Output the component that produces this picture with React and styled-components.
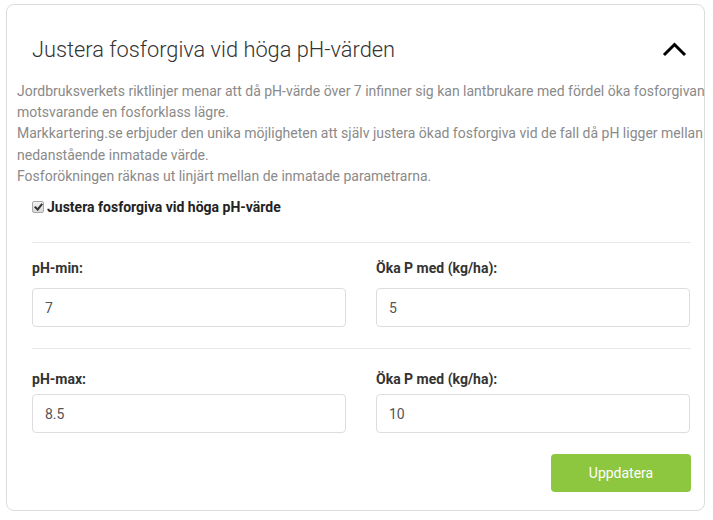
import React, {useState} from 'react';
import styled, {createGlobalStyle} from 'styled-components';

const Global = createGlobalStyle`
    html, body {
        margin: 0;
        padding: 0;
        background: #ffffff;
        font-family: Roboto, "Liberation Sans", sans-serif;
    }
    body {
        padding: 4px 7px 0 6px;
    }
`;

const Card = styled.div`
    border: 1px solid #dcdcdc;
    border-radius: 8px;
    width: 699px;
    height: 507px;
    box-sizing: border-box;
    padding: 0 0 0 10px;
    overflow: visible;
`;

const Head = styled.div`
    display: flex;
    align-items: center;
    justify-content: space-between;
    padding: 26px 17px 0 15px;
    height: 36px;
`;

const Title = styled.h2`
    margin: 0;
    font-size: 21.8px;
    font-weight: 300;
    color: #333333;
`;

const Toggle = styled.button`
    border: 0;
    background: none;
    padding: 0;
    display: flex;
    cursor: pointer;
`;

const Intro = styled.div`
    margin-top: 14px;
    width: 700px;
    font-size: 14px;
    line-height: 21.2px;
    color: #8a8a8a;
`;

const CheckRow = styled.label`
    display: flex;
    align-items: center;
    gap: 3px;
    margin: 12px 0 0 15px;
    font-size: 14px;
    font-weight: 700;
    color: #222222;
`;

const Box = styled.input`
    appearance: none;
    width: 12px;
    height: 12px;
    margin: 0 0 1px 0;
    border: 1px solid #a9a9a9;
    border-radius: 2px;
    background: linear-gradient(#f2f2f2, #d8d8d8);
    position: relative;
    &:checked::after {
        content: '';
        position: absolute;
        left: 3px;
        top: 0px;
        width: 3px;
        height: 6px;
        border: solid #333;
        border-width: 0 2px 2px 0;
        transform: rotate(40deg);
    }
`;

const Rule = styled.hr`
    border: 0;
    border-top: 1px solid #e8e8e8;
    margin: ${p => p.top}px 13px 0 15px;
`;

const Grid = styled.div`
    display: grid;
    grid-template-columns: 314px 314px;
    column-gap: 30px;
    margin: 0 0 0 15px;
    padding-top: ${p => p.top}px;
`;

const Field = styled.div`
    display: flex;
    flex-direction: column;
`;

const Label = styled.label`
    font-size: 14px;
    font-weight: 700;
    color: #333333;
    line-height: 20px;
    margin-bottom: ${p => p.gap}px;
`;

const Input = styled.input`
    height: 39px;
    box-sizing: border-box;
    border: 1px solid #dddddd;
    border-radius: 4px;
    padding: 0 12px;
    font-family: inherit;
    font-size: 14px;
    color: #555555;
    outline: none;
`;

const Footer = styled.div`
    display: flex;
    justify-content: flex-end;
    margin: 21px 13px 0 0;
`;

const Button = styled.button`
    width: 140px;
    height: 38px;
    border: 0;
    border-radius: 4px;
    background: #8dc63f;
    color: #ffffff;
    font-family: inherit;
    font-size: 14px;
    cursor: pointer;
`;

const rows = [
    {label: 'pH-min:', value: '7', extra: '5', rule: 27, pad: 15, gap: 10},
    {label: 'pH-max:', value: '8.5', extra: '10', rule: 21, pad: 20, gap: 5},
];

const App = () => {
    const [checked, setChecked] = useState(true);
    return (
        <>
            <Global />
            <Card>
                <Head>
                    <Title>Justera fosforgiva vid höga pH-värden</Title>
                    <Toggle>
                        <svg width="25" height="15" viewBox="0 0 25 15">
                            <path d="M2 13 L12.5 2.5 L23 13" fill="none" stroke="#000" strokeWidth="3" />
                        </svg>
                    </Toggle>
                </Head>
                <Intro>
                    Jordbruksverkets riktlinjer menar att då pH-värde över 7 infinner sig kan lantbrukare med fördel öka fosforgivan motsvarande en fosforklass lägre.<br />
                    Markkartering.se erbjuder den unika möjligheten att själv justera ökad fosforgiva vid de fall då pH ligger mellan nedanstående inmatade värde.<br />
                    Fosforökningen räknas ut linjärt mellan de inmatade parametrarna.
                </Intro>
                <CheckRow>
                    <Box type="checkbox" checked={checked} onChange={() => setChecked(!checked)} />
                    Justera fosforgiva vid höga pH-värde
                </CheckRow>
                {rows.map(row => (
                    <div key={row.label}>
                        <Rule top={row.rule} />
                        <Grid top={row.pad}>
                            <Field>
                                <Label gap={row.gap}>{row.label}</Label>
                                <Input defaultValue={row.value} />
                            </Field>
                            <Field>
                                <Label gap={row.gap}>Öka P med (kg/ha):</Label>
                                <Input defaultValue={row.extra} />
                            </Field>
                        </Grid>
                    </div>
                ))}
                <Footer>
                    <Button>Uppdatera</Button>
                </Footer>
            </Card>
        </>
    );
};

export default App;
